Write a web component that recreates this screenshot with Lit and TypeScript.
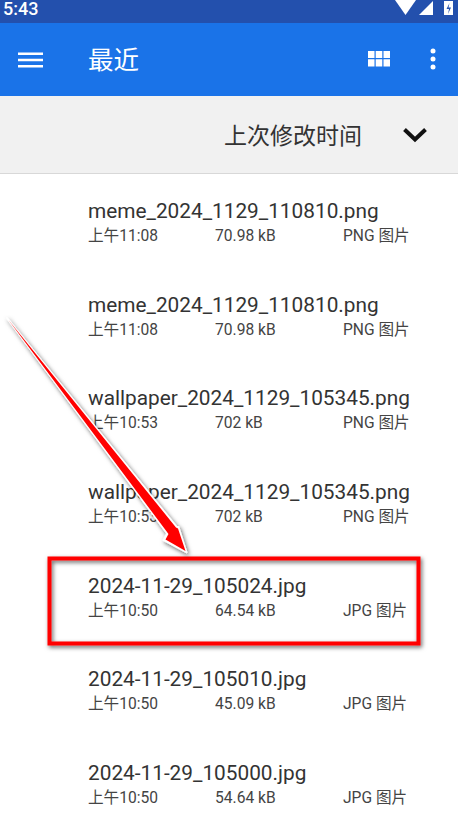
import { LitElement, html, css, svg } from "lit";
import { customElement } from "lit/decorators.js";

const FILES = [
  ["meme_2024_1129_110810.png", "上午11:08", "70.98 kB", "PNG 图片"],
  ["meme_2024_1129_110810.png", "上午11:08", "70.98 kB", "PNG 图片"],
  ["wallpaper_2024_1129_105345.png", "上午10:53", "702 kB", "PNG 图片"],
  ["wallpaper_2024_1129_105345.png", "上午10:53", "702 kB", "PNG 图片"],
  ["2024-11-29_105024.jpg", "上午10:50", "64.54 kB", "JPG 图片"],
  ["2024-11-29_105010.jpg", "上午10:50", "45.09 kB", "JPG 图片"],
  ["2024-11-29_105000.jpg", "上午10:50", "54.64 kB", "JPG 图片"],
];

@customElement("app-root")
export class AppRoot extends LitElement {
  static styles = css`
    :host {
      display: block;
      position: relative;
      width: 458px;
      height: 820px;
      overflow: hidden;
      background: #fff;
      font-family: Roboto, "Noto Sans CJK SC", sans-serif;
      color: #333;
    }
    .status {
      height: 23px;
      box-sizing: border-box;
      background: #2350ad;
      color: #fff;
      padding: 0 0 0 3px;
      font-size: 18px;
      line-height: 18px;
      font-weight: 500;
      display: flex;
      justify-content: space-between;
    }
    .status-icons { display: block; width: 63px; height: 23px; }
    .appbar {
      height: 73px;
      background: #1a73e8;
      display: flex;
      align-items: center;
      color: #fff;
    }
    .menu { margin-left: 18px; width: 25px; height: 18px; display: block; }
    .title { margin-left: 45px; font-size: 25.5px; line-height: 32px; flex: 1; }
    .grid-ico { width: 24px; height: 20px; display: block; margin-right: 39px; margin-top: -2px; }
    .dots { width: 6px; height: 22px; display: block; margin-right: 22px; margin-top: -2px; }
    .sort {
      height: 78px;
      box-sizing: border-box;
      background: #f1f1f1;
      border-bottom: 1px solid #d8d8d8;
      display: flex;
      align-items: center;
      justify-content: flex-end;
    }
    .sort-label { font-size: 23px; color: #333; margin-right: 40px; margin-top: -2px; }
    .chev { width: 26px; height: 16px; margin-right: 30px; display: block; margin-top: 1px; }
    .row {
      height: 93.67px;
      box-sizing: border-box;
      padding: 24px 0 0 88px;
    }
    .name { font-size: 20.8px; line-height: 26px; color: #333; white-space: nowrap; }
    .meta {
      display: grid;
      grid-template-columns: 127px 128px auto;
      font-size: 15.6px;
      line-height: 24px;
      color: #444;
    }
    .overlay { position: absolute; left: 0; top: 0; width: 458px; height: 820px; pointer-events: none; }
  `;

  render() {
    return html`
      <div class="status">
        <span>5:43</span>
        <svg class="status-icons" viewBox="395 0 63 23">
          <path d="M395 0h21l-10.500 15z" fill="#fff"/>
          <path d="M419 15 433 1v14z" fill="#fff"/>
          <rect x="444" y="1" width="9" height="14" fill="#fff"/>
          <path d="M449.500 3 446.500 9h2.500l-1 5 3-6.500h-2.500z" fill="#2350ad"/>
        </svg>
      </div>
      <div class="appbar">
        <svg class="menu" viewBox="0 0 25 18">
          <path d="M0 1.500h25v2.500H0zM0 7.800h25v2.500H0zM0 14h25v2.500H0z" fill="#fff"/>
        </svg>
        <div class="title">最近</div>
        <svg class="grid-ico" viewBox="0 0 24 20">
          <path d="M1 2h6.500v7H1zM8.700 2h6.600v7H8.700zM16.500 2H23v7h-6.500zM1 10.300h6.500v7.200H1zM8.700 10.300h6.600v7.200H8.700zM16.500 10.300H23v7.200h-6.500z" fill="#fff"/>
        </svg>
        <svg class="dots" viewBox="0 0 6 22">
          <circle cx="3" cy="3" r="2.500" fill="#fff"/>
          <circle cx="3" cy="11" r="2.500" fill="#fff"/>
          <circle cx="3" cy="19" r="2.500" fill="#fff"/>
        </svg>
      </div>
      <div class="sort">
        <span class="sort-label">上次修改时间</span>
        <svg class="chev" viewBox="0 0 26 16">
          <path d="M2.500 2.500 13 12.500 23.500 2.500" fill="none" stroke="#111" stroke-width="4"/>
        </svg>
      </div>
      <div>
        ${FILES.map(
          ([n, t, s, k]) => html`
            <div class="row">
              <div class="name">${n}</div>
              <div class="meta"><span>${t}</span><span>${s}</span><span>${k}</span></div>
            </div>
          `
        )}
      </div>
      <svg class="overlay" viewBox="0 0 458 820">
        <defs>
          <filter id="sh" x="-20%" y="-20%" width="140%" height="140%">
            <feDropShadow dx="1.500" dy="2" stdDeviation="2.200" flood-color="#000" flood-opacity="0.6"/>
          </filter>
        </defs>
        ${svg`
          <rect x="49.500" y="558.500" width="369" height="85" fill="none" stroke="#f00" stroke-width="4" filter="url(#sh)"/>
          <path d="M7 318 167 533.500 163.300 540 186.700 552.500 178.500 526.700 176.500 526.500z" fill="#fff" stroke="#fff" stroke-width="1.500" stroke-linejoin="round" filter="url(#sh)"/>
          <path d="M8.500 320 168.500 534 165.500 539.500 185.500 551 178 528.500 176 527.500z" fill="#f00"/>
        `}
      </svg>
    `;
  }
}
